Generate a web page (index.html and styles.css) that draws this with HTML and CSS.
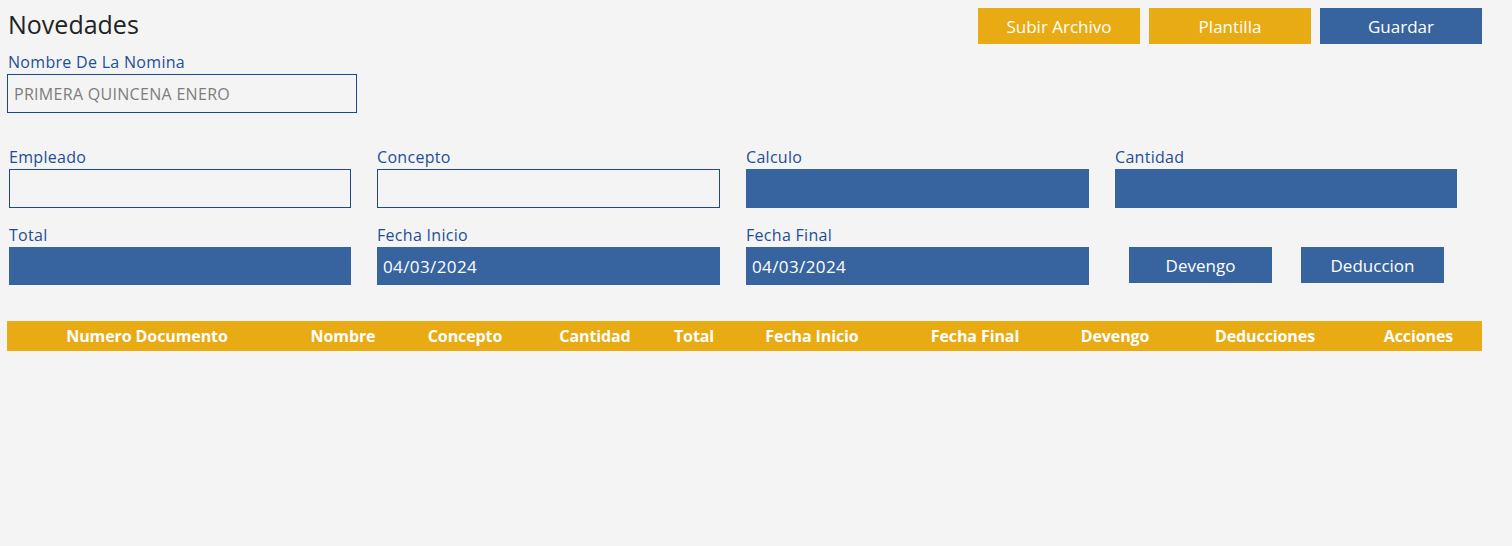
FILE: index.html
```html
<!DOCTYPE html>
<html lang="es">
<head>
<meta charset="utf-8">
<title>Novedades</title>
<link rel="stylesheet" href="styles.css">
</head>
<body>
<div class="page">
  <header class="top">
    <div class="top-left">
      <h1 class="title">Novedades</h1>
      <label class="label">Nombre De La Nomina</label>
      <div class="input outline name-input"><span class="placeholder">PRIMERA QUINCENA ENERO</span></div>
    </div>
    <div class="actions">
      <button class="btn yellow">Subir Archivo</button>
      <button class="btn yellow">Plantilla</button>
      <button class="btn blue">Guardar</button>
    </div>
  </header>

  <section class="form-grid">
    <div class="field"><label class="label">Empleado</label><div class="input outline"></div></div>
    <div class="field"><label class="label">Concepto</label><div class="input outline"></div></div>
    <div class="field"><label class="label">Calculo</label><div class="input filled"></div></div>
    <div class="field"><label class="label">Cantidad</label><div class="input filled"></div></div>
    <div class="field row2"><label class="label">Total</label><div class="input filled"></div></div>
    <div class="field row2"><label class="label">Fecha Inicio</label><div class="input filled"><span class="value">04/03/2024</span></div></div>
    <div class="field row2"><label class="label">Fecha Final</label><div class="input filled"><span class="value">04/03/2024</span></div></div>
    <div class="field row2 btn-field">
      <button class="btn blue small">Devengo</button>
      <button class="btn blue small">Deduccion</button>
    </div>
  </section>

  <table class="grid-table">
    <colgroup>
      <col class="c1"><col class="c2"><col class="c3"><col class="c4"><col class="c5">
      <col class="c6"><col class="c7"><col class="c8"><col class="c9"><col class="c10">
    </colgroup>
    <thead>
      <tr>
        <th>Numero Documento</th>
        <th>Nombre</th>
        <th>Concepto</th>
        <th>Cantidad</th>
        <th>Total</th>
        <th>Fecha Inicio</th>
        <th>Fecha Final</th>
        <th>Devengo</th>
        <th>Deducciones</th>
        <th>Acciones</th>
      </tr>
    </thead>
  </table>
</div>
</body>
</html>
```

FILE: styles.css
```css
html, body {
  margin: 0;
  padding: 0;
  background: #f4f4f4;
}

body {
  font-family: "Open Sans", Roboto, "Liberation Sans", sans-serif;
}

.page {
  width: 1512px;
  height: 546px;
  box-sizing: border-box;
  padding: 8px 30px 0 7px;
}

.top {
  display: flex;
  justify-content: space-between;
  align-items: flex-start;
}

.top-left {
  display: flex;
  flex-direction: column;
  padding-left: 1px;
}

.title {
  margin: 0;
  font-size: 25px;
  font-weight: 400;
  color: #222222;
  line-height: 32px;
}

.label {
  display: block;
  font-size: 16px;
  letter-spacing: 0.3px;
  line-height: 18px;
  color: #1d4e96;
  margin-bottom: 2px;
}

.top-left .label {
  margin-top: 13px;
  margin-bottom: 3px;
}

.input {
  box-sizing: border-box;
  height: 39px;
  display: flex;
  align-items: center;
  padding: 0 6px;
}

.outline {
  border: 1px solid #1d4a8f;
  background: transparent;
}

.filled {
  background: #37649e;
}

.name-input {
  width: 350px;
  margin-left: -1px;
}

.placeholder {
  color: #7d7d7d;
  font-size: 16px;
  letter-spacing: 0.3px;
}

.value {
  color: #ffffff;
  font-size: 17px;
  letter-spacing: 0.4px;
}

.actions {
  display: flex;
  gap: 9px;
}

.btn {
  border: none;
  font-family: "Open Sans", Roboto, "Liberation Sans", sans-serif;
  font-size: 17px;
  color: #ffffff;
  width: 162px;
  height: 36px;
  padding: 0;
  cursor: pointer;
}

.yellow {
  background: #e9ab13;
}

.blue {
  background: #37649e;
}

.form-grid {
  display: grid;
  grid-template-columns: 342px 343px 343px 342px;
  column-gap: 26px;
  row-gap: 18px;
  margin-top: 35px;
  padding-left: 2px;
}

.form-grid .label {
  margin-bottom: 3px;
}

.form-grid .row2 .input {
  height: 38px;
}

.btn-field {
  display: flex;
  align-items: flex-start;
  gap: 29px;
  padding-top: 21px;
  padding-left: 14px;
}

.btn.small {
  width: 143px;
  height: 36px;
}

.grid-table {
  margin-top: 36px;
  width: 1475px;
  border-collapse: collapse;
  table-layout: fixed;
}

.grid-table th {
  background: #e9ab13;
  color: #ffffff;
  font-weight: 700;
  font-size: 16px;
  letter-spacing: -0.1px;
  height: 30px;
  padding: 0;
  text-align: center;
}

.c1 { width: 280px; }
.c2 { width: 112px; }
.c3 { width: 132px; }
.c4 { width: 128px; }
.c5 { width: 70px; }
.c6 { width: 166px; }
.c7 { width: 160px; }
.c8 { width: 120px; }
.c9 { width: 180px; }
.c10 { width: 127px; }
```
